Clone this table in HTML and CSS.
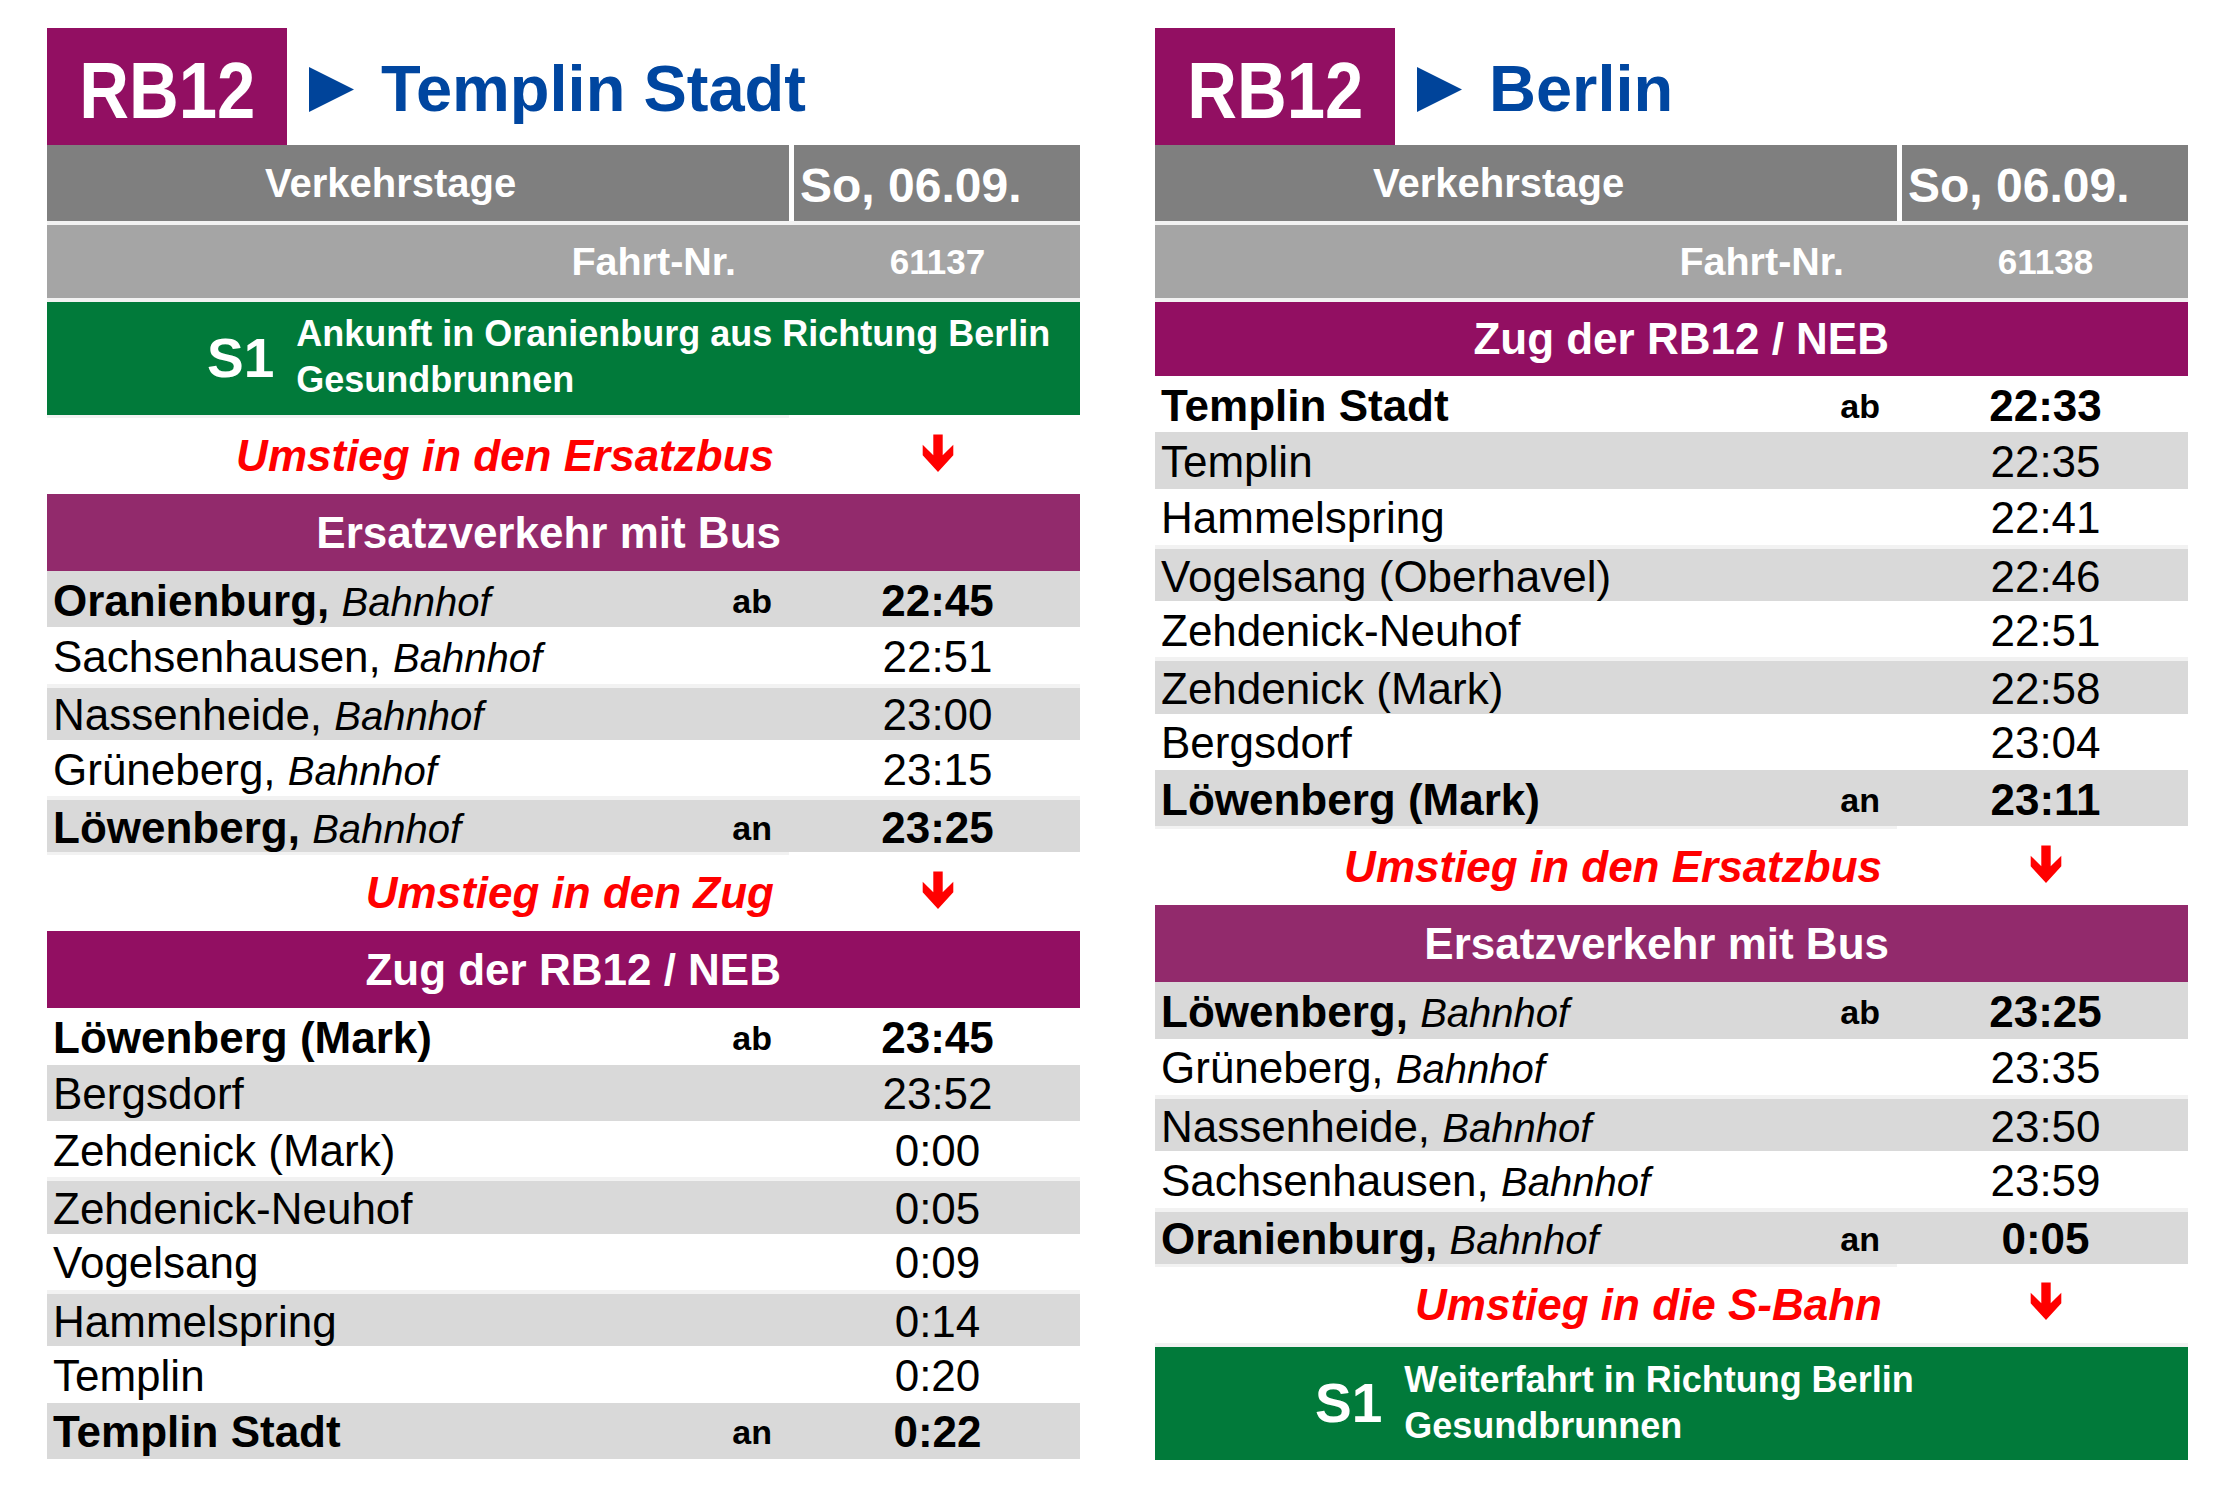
FILE: index.html
```html
<!DOCTYPE html>
<html lang="de">
<head>
<meta charset="utf-8">
<title>RB12 Fahrplan</title>
<link rel="stylesheet" href="styles.css">
</head>
<body>
<div class="page">
  <section class="panel">
    <div class="head">
      <div class="badge"><span>RB12</span></div>
      <svg class="tri" viewBox="0 0 45 45"><polygon points="0,0 45,22.5 0,45" fill="#00449a"/></svg>
      <h1 class="dest">Templin Stadt</h1>
    </div>
    <div class="verk"><div class="lbl">Verkehrstage</div><div class="date">So, 06.09.</div></div>
    <div class="fahrt"><div class="lbl">Fahrt-Nr.</div><div class="num">61137</div></div>
    <div class="sbahn"><div class="s1">S1</div><div class="stext">Ankunft in Oranienburg aus Richtung Berlin<br>Gesundbrunnen</div></div>
    <div class="transfer"><div class="c1">Umstieg in den Ersatzbus</div><div class="c2"><svg class="arrow" viewBox="0 0 32 38"><polygon points="11.3,0.5 20.7,0.5 20.7,21.3 31.3,10.7 31.3,21.3 16,38 0.7,21.3 0.7,10.7 11.3,21.3" fill="#ff0000"/></svg></div></div>
    <div class="sec bus"><div class="c1">Ersatzverkehr mit Bus</div></div>
    <div class="stop alt strong"><div class="name"><b>Oranienburg,</b> <i>Bahnhof</i></div><div class="aa">ab</div><div class="time">22:45</div></div>
    <div class="stop"><div class="name">Sachsenhausen, <i>Bahnhof</i></div><div class="aa"></div><div class="time">22:51</div></div>
    <div class="stop alt sep"><div class="name">Nassenheide, <i>Bahnhof</i></div><div class="aa"></div><div class="time">23:00</div></div>
    <div class="stop"><div class="name">Grüneberg, <i>Bahnhof</i></div><div class="aa"></div><div class="time">23:15</div></div>
    <div class="stop alt sep strong"><div class="name"><b>Löwenberg,</b> <i>Bahnhof</i></div><div class="aa">an</div><div class="time">23:25</div></div>
    <div class="transfer"><div class="c1">Umstieg in den Zug</div><div class="c2"><svg class="arrow" viewBox="0 0 32 38"><polygon points="11.3,0.5 20.7,0.5 20.7,21.3 31.3,10.7 31.3,21.3 16,38 0.7,21.3 0.7,10.7 11.3,21.3" fill="#ff0000"/></svg></div></div>
    <div class="sec zug"><div class="c1">Zug der RB12 / NEB</div></div>
    <div class="stop strong"><div class="name"><b>Löwenberg (Mark)</b></div><div class="aa">ab</div><div class="time">23:45</div></div>
    <div class="stop alt"><div class="name">Bergsdorf</div><div class="aa"></div><div class="time">23:52</div></div>
    <div class="stop"><div class="name">Zehdenick (Mark)</div><div class="aa"></div><div class="time">0:00</div></div>
    <div class="stop alt sep"><div class="name">Zehdenick-Neuhof</div><div class="aa"></div><div class="time">0:05</div></div>
    <div class="stop"><div class="name">Vogelsang</div><div class="aa"></div><div class="time">0:09</div></div>
    <div class="stop alt sep"><div class="name">Hammelspring</div><div class="aa"></div><div class="time">0:14</div></div>
    <div class="stop"><div class="name">Templin</div><div class="aa"></div><div class="time">0:20</div></div>
    <div class="stop alt strong"><div class="name"><b>Templin Stadt</b></div><div class="aa">an</div><div class="time">0:22</div></div>
  </section>

  <section class="panel">
    <div class="head">
      <div class="badge"><span>RB12</span></div>
      <svg class="tri" viewBox="0 0 45 45"><polygon points="0,0 45,22.5 0,45" fill="#00449a"/></svg>
      <h1 class="dest">Berlin</h1>
    </div>
    <div class="verk"><div class="lbl">Verkehrstage</div><div class="date">So, 06.09.</div></div>
    <div class="fahrt"><div class="lbl">Fahrt-Nr.</div><div class="num">61138</div></div>
    <div class="sec zug first"><div class="c1">Zug der RB12 / NEB</div></div>
    <div class="stop strong"><div class="name"><b>Templin Stadt</b></div><div class="aa">ab</div><div class="time">22:33</div></div>
    <div class="stop alt"><div class="name">Templin</div><div class="aa"></div><div class="time">22:35</div></div>
    <div class="stop"><div class="name">Hammelspring</div><div class="aa"></div><div class="time">22:41</div></div>
    <div class="stop alt sep"><div class="name">Vogelsang (Oberhavel)</div><div class="aa"></div><div class="time">22:46</div></div>
    <div class="stop"><div class="name">Zehdenick-Neuhof</div><div class="aa"></div><div class="time">22:51</div></div>
    <div class="stop alt sep"><div class="name">Zehdenick (Mark)</div><div class="aa"></div><div class="time">22:58</div></div>
    <div class="stop"><div class="name">Bergsdorf</div><div class="aa"></div><div class="time">23:04</div></div>
    <div class="stop alt strong"><div class="name"><b>Löwenberg (Mark)</b></div><div class="aa">an</div><div class="time">23:11</div></div>
    <div class="transfer"><div class="c1">Umstieg in den Ersatzbus</div><div class="c2"><svg class="arrow" viewBox="0 0 32 38"><polygon points="11.3,0.5 20.7,0.5 20.7,21.3 31.3,10.7 31.3,21.3 16,38 0.7,21.3 0.7,10.7 11.3,21.3" fill="#ff0000"/></svg></div></div>
    <div class="sec bus"><div class="c1">Ersatzverkehr mit Bus</div></div>
    <div class="stop alt strong"><div class="name"><b>Löwenberg,</b> <i>Bahnhof</i></div><div class="aa">ab</div><div class="time">23:25</div></div>
    <div class="stop"><div class="name">Grüneberg, <i>Bahnhof</i></div><div class="aa"></div><div class="time">23:35</div></div>
    <div class="stop alt sep"><div class="name">Nassenheide, <i>Bahnhof</i></div><div class="aa"></div><div class="time">23:50</div></div>
    <div class="stop"><div class="name">Sachsenhausen, <i>Bahnhof</i></div><div class="aa"></div><div class="time">23:59</div></div>
    <div class="stop alt sep strong"><div class="name"><b>Oranienburg,</b> <i>Bahnhof</i></div><div class="aa">an</div><div class="time">0:05</div></div>
    <div class="transfer"><div class="c1">Umstieg in die S-Bahn</div><div class="c2"><svg class="arrow" viewBox="0 0 32 38"><polygon points="11.3,0.5 20.7,0.5 20.7,21.3 31.3,10.7 31.3,21.3 16,38 0.7,21.3 0.7,10.7 11.3,21.3" fill="#ff0000"/></svg></div></div>
    <div class="sbahn"><div class="s1">S1</div><div class="stext">Weiterfahrt in Richtung Berlin<br>Gesundbrunnen</div></div>
  </section>
</div>
</body>
</html>
```

FILE: styles.css
```css
* { box-sizing: border-box; }

body {
  margin: 0;
  background: #ffffff;
  font-family: "Liberation Sans", Arial, sans-serif;
  color: #000000;
}

.page {
  display: flex;
  gap: 75px;
  padding: 28px 0 0 47px;
}

.panel {
  width: 1033px;
  display: flex;
  flex-direction: column;
}

/* Header */
.head {
  display: flex;
  align-items: center;
  height: 117px;
}

.badge {
  width: 240px;
  height: 117px;
  background: #920f62;
  color: #ffffff;
  display: flex;
  align-items: center;
  justify-content: center;
  padding-top: 8px;
}

.badge span {
  display: inline-block;
  font-weight: 700;
  font-size: 80px;
  line-height: 1;
  transform: scaleX(0.86);
}

.tri {
  width: 45px;
  height: 45px;
  margin-left: 22px;
  margin-top: 5px;
  flex: none;
}

.dest {
  margin: 0 0 0 27px;
  padding-top: 4px;
  font-size: 65px;
  font-weight: 700;
  line-height: 1;
  color: #0046a0;
}

/* Verkehrstage */
.verk {
  display: grid;
  grid-template-columns: 742px 1fr;
  column-gap: 5px;
  height: 76px;
}

.verk > div {
  background: #7f7f7f;
  color: #ffffff;
  font-weight: 700;
  display: flex;
  align-items: center;
  line-height: 1;
}

.verk .lbl {
  font-size: 40px;
  padding-left: 218px;
}

.verk .date {
  font-size: 48px;
  padding-left: 6px;
  padding-top: 6px;
}

/* Fahrt-Nr */
.fahrt {
  display: grid;
  grid-template-columns: 742px 1fr;
  height: 76.5px;
  border-top: 4px solid #f2f2f2;
  background: #a5a5a5;
  color: #ffffff;
  font-weight: 700;
  line-height: 1;
}

.fahrt .lbl {
  font-size: 39.5px;
  display: flex;
  align-items: center;
  justify-content: flex-end;
  padding-right: 53px;
}

.fahrt .num {
  font-size: 35px;
  display: flex;
  align-items: center;
  justify-content: center;
  padding-left: 6px;
}

/* S-Bahn box */
.sbahn {
  display: flex;
  align-items: center;
  height: 117.5px;
  border-top: 4.5px solid #f2f2f2;
  background: #017a3a;
  color: #ffffff;
  font-weight: 700;
  padding-left: 160px;
}

.s1 {
  font-size: 55px;
  line-height: 1;
}

.stext {
  margin-left: 22px;
  font-size: 36px;
  line-height: 46px;
  padding-bottom: 2px;
}

/* Transfer rows */
.transfer {
  display: grid;
  grid-template-columns: 742px 1fr;
  height: 79px;
}

.transfer .c1 {
  border-top: 3px solid #f2f2f2;
  display: flex;
  align-items: center;
  justify-content: flex-end;
  padding-right: 15px;
  color: #ff0000;
  font-size: 44px;
  font-weight: 700;
  font-style: italic;
  line-height: 1;
}

.transfer .c2 {
  display: flex;
  align-items: center;
  justify-content: center;
  padding-left: 6px;
  padding-bottom: 4px;
}

.arrow {
  width: 32px;
  height: 38px;
}

/* Section headers */
.sec {
  display: grid;
  grid-template-columns: 742px 1fr;
  height: 77px;
  color: #ffffff;
  font-weight: 700;
  font-size: 44px;
  line-height: 1;
}

.sec.zug { background: #920f62; }
.sec.bus { background: #922a6c; }

.sec.first {
  height: 78.5px;
  border-top: 4.5px solid #f2f2f2;
}

.sec .c1 {
  display: flex;
  align-items: center;
  justify-content: flex-end;
  padding-right: 8px;
}

/* Stop rows */
.stop {
  display: grid;
  grid-template-columns: 1fr auto 291px;
  align-items: center;
  height: 56.3px;
  padding-top: 3px;
  font-size: 44px;
  line-height: 1;
}

.stop.alt { background: #d9d9d9; }
.stop.sep { border-top: 4px solid #f2f2f2; }

.stop .name {
  padding-left: 6px;
  white-space: nowrap;
}

.stop .name b { font-weight: 700; }
.stop .name i { font-style: italic; font-size: 40px; }

.stop .aa {
  font-size: 34px;
  font-weight: 700;
  padding-right: 17px;
}

.stop .time {
  text-align: center;
  padding-left: 6px;
}

.stop.strong .time { font-weight: 700; }
```
